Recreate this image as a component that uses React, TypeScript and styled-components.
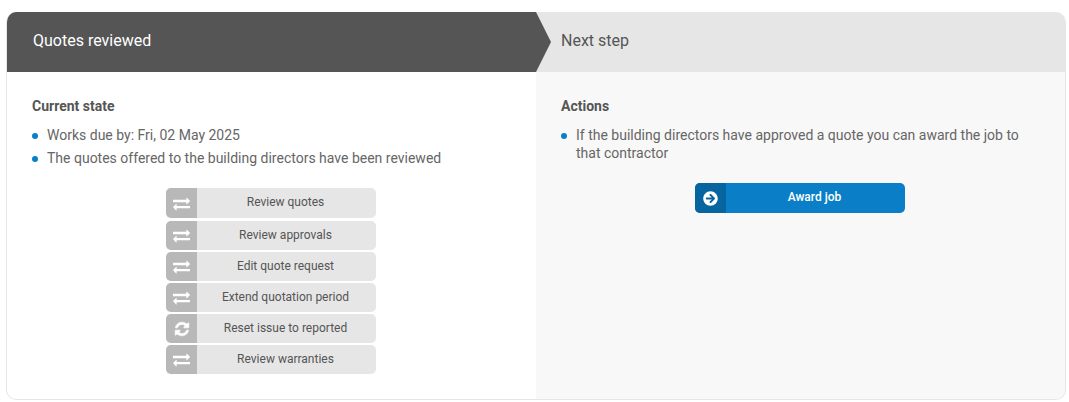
import styled, { createGlobalStyle } from 'styled-components';
import type { ReactNode } from 'react';
import { FaArrowCircleRight } from 'react-icons/fa';

const GlobalStyle = createGlobalStyle`
  html, body {
    margin: 0;
    padding: 0;
    background: #ffffff;
  }
  body {
    font-family: Roboto, "Liberation Sans", sans-serif;
    color: #555555;
  }
`;

const ExchangeIcon = () => (
  <svg viewBox="0 0 1792 1792" width="17" height="17" fill="currentColor">
    <path d="M1792 1184v192q0 13-9.5 22.5t-22.5 9.5h-1376v192q0 13-9.5 22.5t-22.5 9.5q-12 0-24-10l-319-320q-9-9-9-22 0-14 9-23l320-320q9-9 23-9 13 0 22.5 9.5t9.5 22.5v192h1376q13 0 22.5 9.5t9.5 22.5zm0-544q0 14-9 23l-320 320q-9 9-23 9-13 0-22.5-9.5t-9.5-22.5v-192h-1376q-13 0-22.5-9.5t-9.5-22.5v-192q0-13 9.5-22.5t22.5-9.5h1376v-192q0-14 9-23t23-9q12 0 24 10l319 319q9 9 9 23z" />
  </svg>
);

const RefreshIcon = () => (
  <svg
    viewBox="0 0 1792 1792"
    width="16"
    height="16"
    fill="currentColor"
    stroke="currentColor"
    strokeWidth="70"
  >
    <path d="M1639 1056q0 5-1 7-64 268-268 434.5t-478 166.5q-146 0-282.5-55t-243.5-157l-129 129q-19 19-45 19t-45-19-19-45v-448q0-26 19-45t45-19h448q26 0 45 19t19 45-19 45l-137 137q71 66 161 102t187 36q134 0 250-65t186-179q11-17 53-117 8-23 30-23h192q13 0 22.5 9.5t9.5 22.5zm25-800v448q0 26-19 45t-45 19h-448q-26 0-45-19t-19-45 19-45l138-138q-148-137-349-137-134 0-250 65t-186 179q-11 17-53 117-8 23-30 23h-199q-13 0-22.5-9.5t-9.5-22.5v-7q65-268 270-434.5t480-166.5q146 0 284 55.5t245 156.5l130-129q19-19 45-19t45 19 19 45z" />
  </svg>
);

const actions: { label: string; icon: ReactNode }[] = [
  { label: 'Review quotes', icon: <ExchangeIcon /> },
  { label: 'Review approvals', icon: <ExchangeIcon /> },
  { label: 'Edit quote request', icon: <ExchangeIcon /> },
  { label: 'Extend quotation period', icon: <ExchangeIcon /> },
  { label: 'Reset issue to reported', icon: <RefreshIcon /> },
  { label: 'Review warranties', icon: <ExchangeIcon /> },
];

const App = () => {
  return (
    <Page>
      <GlobalStyle />
      <Card>
        <Column>
          <CurrentStep>Quotes reviewed</CurrentStep>
          <Body>
            <Heading>Current state</Heading>
            <List>
              <Item>Works due by: Fri, 02 May 2025</Item>
              <Item>The quotes offered to the building directors have been reviewed</Item>
            </List>
            <ButtonStack>
              {actions.map((action) => (
                <ActionButton key={action.label}>
                  <IconCell>{action.icon}</IconCell>
                  <ButtonLabel>{action.label}</ButtonLabel>
                </ActionButton>
              ))}
            </ButtonStack>
          </Body>
        </Column>
        <Column>
          <NextStep>Next step</NextStep>
          <Body $muted>
            <Heading>Actions</Heading>
            <List>
              <Item>
                If the building directors have approved a quote you can award the job to that
                contractor
              </Item>
            </List>
            <PrimaryStack>
              <ActionButton $primary>
                <IconCell $primary>
                  <FaArrowCircleRight />
                </IconCell>
                <ButtonLabel $primary>Award job</ButtonLabel>
              </ActionButton>
            </PrimaryStack>
          </Body>
        </Column>
      </Card>
    </Page>
  );
};

export default App;

const Page = styled.div`
  padding: 12px 3px 2px 6px;
`;

const Card = styled.div`
  display: grid;
  grid-template-columns: 529px 529px;
  width: 1060px;
  height: 388px;
  box-sizing: border-box;
  border: 1px solid #e6e6e6;
  border-top: 0;
  border-radius: 10px;
  overflow: hidden;
`;

const Column = styled.div`
  display: flex;
  flex-direction: column;
  min-width: 0;
`;

const CurrentStep = styled.div`
  position: relative;
  z-index: 1;
  height: 60px;
  padding-left: 26px;
  background: #555555;
  color: #ffffff;
  font-size: 16px;
  line-height: 57px;

  &::after {
    content: '';
    position: absolute;
    top: 0;
    left: 100%;
    width: 15px;
    height: 60px;
    background: #555555;
    clip-path: polygon(0 0, 100% 50%, 0 100%);
  }
`;

const NextStep = styled.div`
  height: 60px;
  padding-left: 25px;
  background: #e6e6e6;
  font-size: 16px;
  line-height: 57px;
`;

const Body = styled.div<{ $muted?: boolean }>`
  flex: 1;
  padding: 25px 25px 0;
  background: ${({ $muted }) => ($muted ? '#f8f8f8' : 'transparent')};
`;

const Heading = styled.div`
  font-size: 14px;
  font-weight: 700;
  line-height: 18px;
  margin-bottom: 11px;
`;

const List = styled.ul`
  list-style: none;
  margin: 0;
  padding: 0;
`;

const Item = styled.li`
  position: relative;
  padding-left: 15px;
  color: #666666;
  font-size: 14px;
  line-height: 18px;
  margin-bottom: 5px;

  &::before {
    content: '';
    position: absolute;
    left: 0;
    top: 7px;
    width: 6px;
    height: 6px;
    border-radius: 50%;
    background: #0a7fc7;
  }
`;

const ButtonStack = styled.div`
  display: flex;
  flex-direction: column;
  gap: 2px;
  width: 210px;
  margin: 21px 0 0 134px;
`;

const PrimaryStack = styled.div`
  width: 210px;
  margin: 21px 0 0 134px;
`;

const ActionButton = styled.div<{ $primary?: boolean }>`
  display: flex;
  height: ${({ $primary }) => ($primary ? '30px' : '29px')};
  border-radius: 5px;
  overflow: hidden;
  background: ${({ $primary }) => ($primary ? '#0a7fc7' : '#e6e6e6')};

  &:first-child:not(:only-child) {
    height: 30px;
    margin-bottom: 1px;
  }
`;

const IconCell = styled.div<{ $primary?: boolean }>`
  flex: 0 0 31px;
  display: flex;
  align-items: center;
  justify-content: center;
  background: ${({ $primary }) => ($primary ? '#06659f' : '#b8b8b8')};
  color: #ffffff;
  font-size: 15px;
`;

const ButtonLabel = styled.div<{ $primary?: boolean }>`
  flex: 1;
  padding-right: 2px;
  text-align: center;
  font-size: 12px;
  font-weight: ${({ $primary }) => ($primary ? 500 : 400)};
  line-height: 29px;
  color: ${({ $primary }) => ($primary ? '#ffffff' : '#555555')};
`;
